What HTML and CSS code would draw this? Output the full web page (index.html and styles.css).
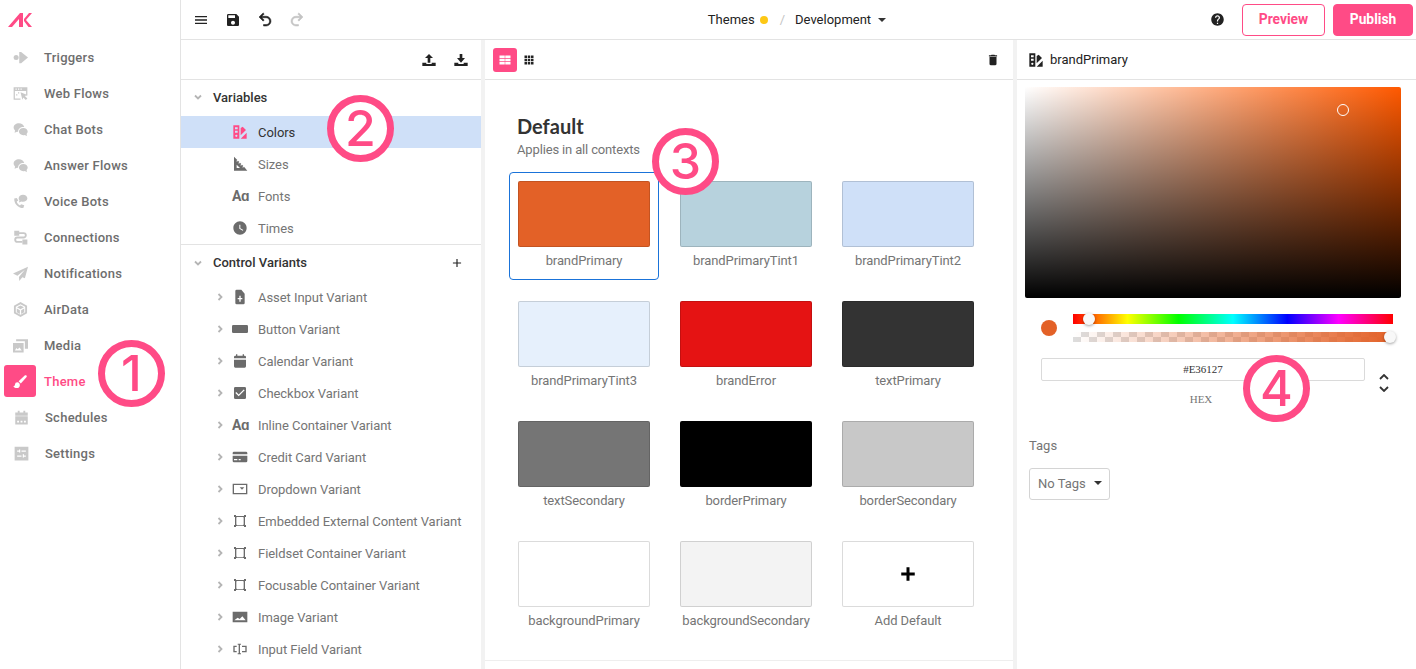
FILE: index.html
```html
<!DOCTYPE html>
<html lang="en">
<head>
  <meta charset="UTF-8" />
  <title>Theme</title>
  <link rel="stylesheet" href="styles.css">
</head>
<body>
  <svg class="sprite">
    <symbol id="i-trigger" viewBox="0 0 24 24"><circle cx="5" cy="12" r="4"/><path d="M10 3h3l11 9-11 9h-3z"/></symbol>
    <symbol id="i-web" viewBox="0 0 24 24"><path fill-rule="evenodd" d="M1 2h22v13h-2V8H3v12h9v2H1zM4 4v2h2V4zm4 0v2h2V4zm4 0v2h2V4z"/><path d="M12 10l11 4.500-4 1.500 4 4-2.500 2.500-4-4L15 22zM8 10h2v2H8zM5 13h2v2H5z"/></symbol>
    <symbol id="i-chat" viewBox="0 0 24 24"><path d="M9.500 2C4.800 2 1 5 1 8.800c0 1.800.9 3.400 2.300 4.600L2.500 17l4-1.500c.5.100 1 .2 1.600.3C8 11 12 7.500 18 8 17 4.500 13.500 2 9.500 2z"/><path d="M16.500 9.500c-4 0-7 2.600-7 5.800s3 5.800 7 5.800c.7 0 1.400-.1 2-.3l4 1.700-.8-3.500c1.200-1 1.800-2.300 1.800-3.700 0-3.200-3-5.800-7-5.800z"/></symbol>
    <symbol id="i-voice" viewBox="0 0 24 24"><path d="M6 6.500L2 7c-.6 8 5.500 15 14.500 15.500l1.500-4.500-5-1.500-1.800 1.800C8.500 17 6.500 14.500 6 12l2.500-1.500z"/><path d="M16 1c-3.800 0-7 2.500-7 5.700 0 1.300.5 2.400 1.300 3.300L9.500 13.500l3.900-1.500c.8.200 1.700.4 2.600.4 3.800 0 7-2.500 7-5.700S19.800 1 16 1z"/></symbol>
    <symbol id="i-conn" viewBox="0 0 24 24"><path d="M2 1h8v8H2zM15 15h8v8h-8z"/><path fill="none" stroke="currentColor" stroke-width="3" d="M9 5h8a3.500 3.500 0 0 1 0 7H7a3.500 3.500 0 0 0 0 7h8"/></symbol>
    <symbol id="i-plane" viewBox="0 0 24 24"><path d="M24 1L0 12l7 3.500L19 6l-9.500 11.500L10 24l5-6 4 1.500z"/></symbol>
    <symbol id="i-air" viewBox="0 0 24 24"><path fill-rule="evenodd" d="M12 0l10.500 6v12L12 24 1.500 18V6zM12 3.500L4.500 7.700v8.600l7.500 4.200 7.500-4.200V7.700z"/><path d="M12 5.500l5.500 3L12 11.500l-5.500-3zM6 10.500l5 2.800V19l-5-2.800zM18 10.500l-5 2.800V19l5-2.800z"/></symbol>
    <symbol id="i-media" viewBox="0 0 24 24"><path fill-rule="evenodd" d="M0 8h17v15H0zM3 20h11l-3.500-5-3 3-2-2z"/><path d="M5 2h19v15h-5V5H5z"/></symbol>
    <symbol id="i-brush" viewBox="0 0 24 24"><path d="M21.500 2.500c-.8-.8-2-.8-2.800 0L9 11.500l3.500 3.500 9-9.700c.8-.8.8-2 0-2.800zM7 13a3.800 3.800 0 0 0-3.800 3.800c0 1.500-1.300 2.700-2.700 2.700 1.200 1.900 3.300 3 5.500 3a5 5 0 0 0 5-5c0-2.500-1.700-4.500-4-4.500z"/></symbol>
    <symbol id="i-sched" viewBox="0 0 24 24"><path fill-rule="evenodd" d="M6 1h3v3h6V1h3v3h4v5H2V4h4zM2 10h20v13H2zm3 7v3h3v-3zm5.500 0v3h3v-3zm5.500 0v3h3v-3z"/></symbol>
    <symbol id="i-settings" viewBox="0 0 24 24"><path fill-rule="evenodd" d="M1 1h22v22H1zM5 7v2h3v1.500h2V5.500H8V7zM12 7v2h7V7zM5 15v2h7v-2zM14 13v5.500h2V17h3v-2h-3v-2z"/></symbol>
    <symbol id="i-menu" viewBox="0 0 24 24"><path d="M3 18h18v-2H3v2zm0-5h18v-2H3v2zm0-7v2h18V6H3z"/></symbol>
    <symbol id="i-save" viewBox="0 0 24 24"><path d="M17 3H5c-1.110 0-2 .9-2 2v14c0 1.100.89 2 2 2h14c1.100 0 2-.9 2-2V7l-4-4zm-5 16c-1.660 0-3-1.340-3-3s1.340-3 3-3 3 1.340 3 3-1.340 3-3 3zm3-10H5V5h10v4z"/></symbol>
    <symbol id="i-undo" viewBox="0 0 24 24"><path stroke="currentColor" stroke-width=".7" d="M13.500 7A6.500 6.500 0 0 1 20 13.500 6.500 6.500 0 0 1 13.500 20H10v-2h3.500c2.500 0 4.500-2 4.500-4.500S16 9 13.500 9H7.830l3.080 3.090L9.500 13.500 4 8l5.500-5.500 1.420 1.410L7.830 7h5.670z"/></symbol>
    <symbol id="i-redo" viewBox="0 0 24 24"><path stroke="currentColor" stroke-width=".7" d="M10.500 7A6.500 6.500 0 0 0 4 13.500 6.500 6.500 0 0 0 10.500 20H14v-2h-3.500C8 18 6 16 6 13.500S8 9 10.500 9h5.670l-3.080 3.090 1.410 1.410L20 8l-5.500-5.500-1.420 1.410L16.170 7H10.500z"/></symbol>
    <symbol id="i-help" viewBox="0 0 24 24"><path d="M12 2C6.480 2 2 6.480 2 12s4.480 10 10 10 10-4.480 10-10S17.520 2 12 2zm1 17h-2v-2h2v2zm2.070-7.750l-.9.920C13.450 12.900 13 13.500 13 15h-2v-.5c0-1.100.45-2.100 1.170-2.830l1.240-1.260c.37-.36.59-.86.59-1.410 0-1.100-.9-2-2-2s-2 .9-2 2H8c0-2.210 1.790-4 4-4s4 1.790 4 4c0 .88-.36 1.680-.93 2.250z"/></symbol>
    <symbol id="i-up" viewBox="0 0 24 24"><path d="M12 3l-6 6h4v7h4V9h4zM2 16h6v2h8v-2h6v5H2z"/></symbol>
    <symbol id="i-down" viewBox="0 0 24 24"><path d="M10 3h4v6h4l-6 7-6-7h4zM2 16h6v2h8v-2h6v5H2z"/></symbol>
    <symbol id="i-plus" viewBox="0 0 24 24"><path d="M10 3h4v7h7v4h-7v7h-4v-7H3v-4h7z"/></symbol>
    <symbol id="i-plus-thin" viewBox="0 0 24 24"><path d="M19 13h-6v6h-2v-6H5v-2h6V5h2v6h6v2z"/></symbol>
    <symbol id="i-swatch" viewBox="0 0 24 24"><path fill-rule="evenodd" d="M2 2h9v20H2zM4.500 5v3h4V5zm0 5v3h4v-3zm2 6a1.700 1.700 0 1 0 0 3.400 1.700 1.700 0 0 0 0-3.400z"/><path d="M13 6l3-2 5 5-8 8zM13 22l9-9v9z"/></symbol>
    <symbol id="i-ruler" viewBox="0 0 24 24"><path fill-rule="evenodd" d="M3 1l5 5-1.500 1.500 1 1L9 7l2 2-1.500 1.500 1 1L12 10l2 2-1.500 1.500 1 1L15 13l2 2-1.500 1.500 1 1L18 16l5 6H3zM7 13v5h5z"/></symbol>
    <symbol id="i-clock" viewBox="0 0 24 24"><path d="M12 2C6.500 2 2 6.500 2 12s4.500 10 10 10 10-4.500 10-10S17.500 2 12 2zm4.200 14.200L11 13V7h1.500v5.200l4.500 2.700-.8 1.300z"/></symbol>
    <symbol id="i-file" viewBox="0 0 24 24"><path d="M14 1H7a2 2 0 0 0-2 2v18a2 2 0 0 0 2 2h10a2 2 0 0 0 2-2V7l-5-6zm1.500 14.500H13V19h-2v-3.500H8.500v-2H11V10h2v3.500h2.500v2z"/></symbol>
    <symbol id="i-button" viewBox="0 0 24 24"><rect x="0" y="6" width="24" height="12" rx="2"/></symbol>
    <symbol id="i-cal" viewBox="0 0 24 24"><path d="M6 2h2v2h8V2h2v2h1a2 2 0 0 1 2 2v2H3V6a2 2 0 0 1 2-2h1zM3 10h18v10a2 2 0 0 1-2 2H5a2 2 0 0 1-2-2z"/></symbol>
    <symbol id="i-check" viewBox="0 0 24 24"><path d="M19 3H5a2 2 0 0 0-2 2v14a2 2 0 0 0 2 2h14a2 2 0 0 0 2-2V5a2 2 0 0 0-2-2zm-9 14l-5-5 1.410-1.410L10 14.170l7.590-7.590L19 8l-9 9z"/></symbol>
    <symbol id="i-card" viewBox="0 0 24 24"><path fill-rule="evenodd" d="M1 6a2 2 0 0 1 2-2h18a2 2 0 0 1 2 2v2H1zM1 10h22v8a2 2 0 0 1-2 2H3a2 2 0 0 1-2-2zm2 5v2h5v-2zm7 0v2h3v-2z"/></symbol>
    <symbol id="i-drop" viewBox="0 0 24 24"><path fill-rule="evenodd" d="M1 4h22v16H1zm2 2v12h18V6z"/><path d="M15 13l-3.500-3.500h7z"/></symbol>
    <symbol id="i-box" viewBox="0 0 24 24"><path d="M3 3h3v1.500h12V3h3v3h-1.500v12H21v3h-3v-1.500H6V21H3v-3h1.500V6H3zm4.500 3v.5H6.500v11h1v1h9v-1h1v-11h-1V6z"/></symbol>
    <symbol id="i-image" viewBox="0 0 24 24"><path fill-rule="evenodd" d="M1 4h22v16H1zM3.500 17h17l-5-6-4 4-3-2z"/></symbol>
    <symbol id="i-input" viewBox="0 0 24 24"><path d="M2 7h5v2H4v6h3v2H2zM15 7h7v10h-7v-2h5V9h-5zM8.500 4h5v1.500h-1.500v13h1.500V20h-5v-1.500H10v-13H8.500z"/></symbol>
    <symbol id="i-table" viewBox="0 0 24 24"><path d="M1 3h10.500v5.200H1zM12.500 3H23v5.200H12.500zM1 9.400h10.500v5.200H1zM12.500 9.400H23v5.200H12.500zM1 15.800h10.500V21H1zM12.500 15.800H23V21H12.500z"/></symbol>
    <symbol id="i-apps" viewBox="0 0 24 24"><path d="M3 3h5v5H3zM9.500 3h5v5h-5zM16 3h5v5h-5zM3 9.500h5v5H3zM9.500 9.500h5v5h-5zM16 9.500h5v5h-5zM3 16h5v5H3zM9.500 16h5v5h-5zM16 16h5v5h-5z"/></symbol>
    <symbol id="i-trash" viewBox="0 0 24 24"><path d="M6 19c0 1.100.9 2 2 2h8c1.100 0 2-.9 2-2V7H6v12zM19 4h-3.500l-1-1h-5l-1 1H5v2h14V4z"/></symbol>
    <symbol id="i-chev-d" viewBox="0 0 10 10"><path fill="none" stroke="currentColor" stroke-width="1.800" d="M2 3.500l3 3 3-3"/></symbol>
    <symbol id="i-chev-r" viewBox="0 0 10 10"><path fill="none" stroke="currentColor" stroke-width="1.800" d="M3.500 2l3 3-3 3"/></symbol>
  </svg>

  <div class="app">
    <nav class="sidebar">
      <div class="logo">
        <svg width="24" height="14" viewBox="0 0 24 14"><path d="M0 14L12 0h3v14h-4V6l-7 8zM16 6l5-6h3l-6 7 6 7h-3.500L16 8z"/></svg>
      </div>
      <a class="nav-item"><span class="nav-icon"><svg><use href="#i-trigger"/></svg></span>Triggers</a>
      <a class="nav-item"><span class="nav-icon"><svg><use href="#i-web"/></svg></span>Web Flows</a>
      <a class="nav-item"><span class="nav-icon"><svg><use href="#i-chat"/></svg></span>Chat Bots</a>
      <a class="nav-item"><span class="nav-icon"><svg><use href="#i-chat"/></svg></span>Answer Flows</a>
      <a class="nav-item"><span class="nav-icon"><svg><use href="#i-voice"/></svg></span>Voice Bots</a>
      <a class="nav-item"><span class="nav-icon"><svg><use href="#i-conn"/></svg></span>Connections</a>
      <a class="nav-item"><span class="nav-icon"><svg><use href="#i-plane"/></svg></span>Notifications</a>
      <a class="nav-item"><span class="nav-icon"><svg><use href="#i-air"/></svg></span>AirData</a>
      <a class="nav-item"><span class="nav-icon"><svg><use href="#i-media"/></svg></span>Media</a>
      <a class="nav-item active"><span class="nav-icon"><svg><use href="#i-brush"/></svg></span>Theme</a>
      <a class="nav-item nudge"><span class="nav-icon"><svg><use href="#i-sched"/></svg></span>Schedules</a>
      <a class="nav-item nudge"><span class="nav-icon"><svg><use href="#i-settings"/></svg></span>Settings</a>
    </nav>

    <div class="main">
      <header class="topbar">
        <div class="top-tools">
          <svg class="icon16"><use href="#i-menu"/></svg>
          <svg class="icon16"><use href="#i-save"/></svg>
          <svg class="icon16 big"><use href="#i-undo"/></svg>
          <svg class="icon16 big disabled"><use href="#i-redo"/></svg>
        </div>
        <div class="crumbs">
          <span>Themes</span>
          <span class="dot"></span>
          <span class="slash">/</span>
          <span>Development</span>
          <span class="caret"></span>
        </div>
        <div class="top-actions">
          <svg class="icon14 help"><use href="#i-help"/></svg>
          <button class="btn btn-outline">Preview</button>
          <button class="btn btn-solid">Publish</button>
        </div>
      </header>

      <div class="panels">
        <aside class="tree-panel">
          <div class="toolbar toolbar-end">
            <svg class="icon16"><use href="#i-up"/></svg>
            <svg class="icon16"><use href="#i-down"/></svg>
          </div>
          <div class="tree-head head-top"><svg class="chev"><use href="#i-chev-d"/></svg>Variables</div>
          <div class="tree-leaf selected"><svg class="tree-icon"><use href="#i-swatch"/></svg>Colors</div>
          <div class="tree-leaf"><svg class="tree-icon"><use href="#i-ruler"/></svg>Sizes</div>
          <div class="tree-leaf"><span class="tree-icon aa">Aɑ</span>Fonts</div>
          <div class="tree-leaf"><svg class="tree-icon"><use href="#i-clock"/></svg>Times</div>
          <div class="tree-head with-line"><svg class="chev"><use href="#i-chev-d"/></svg>Control Variants<svg class="add"><use href="#i-plus-thin"/></svg></div>
          <div class="tree-item first"><svg class="chev"><use href="#i-chev-r"/></svg><svg class="tree-icon"><use href="#i-file"/></svg>Asset Input Variant</div>
          <div class="tree-item"><svg class="chev"><use href="#i-chev-r"/></svg><svg class="tree-icon"><use href="#i-button"/></svg>Button Variant</div>
          <div class="tree-item"><svg class="chev"><use href="#i-chev-r"/></svg><svg class="tree-icon"><use href="#i-cal"/></svg>Calendar Variant</div>
          <div class="tree-item"><svg class="chev"><use href="#i-chev-r"/></svg><svg class="tree-icon"><use href="#i-check"/></svg>Checkbox Variant</div>
          <div class="tree-item"><svg class="chev"><use href="#i-chev-r"/></svg><span class="tree-icon aa">Aɑ</span>Inline Container Variant</div>
          <div class="tree-item"><svg class="chev"><use href="#i-chev-r"/></svg><svg class="tree-icon"><use href="#i-card"/></svg>Credit Card Variant</div>
          <div class="tree-item"><svg class="chev"><use href="#i-chev-r"/></svg><svg class="tree-icon"><use href="#i-drop"/></svg>Dropdown Variant</div>
          <div class="tree-item"><svg class="chev"><use href="#i-chev-r"/></svg><svg class="tree-icon"><use href="#i-box"/></svg>Embedded External Content Variant</div>
          <div class="tree-item"><svg class="chev"><use href="#i-chev-r"/></svg><svg class="tree-icon"><use href="#i-box"/></svg>Fieldset Container Variant</div>
          <div class="tree-item"><svg class="chev"><use href="#i-chev-r"/></svg><svg class="tree-icon"><use href="#i-box"/></svg>Focusable Container Variant</div>
          <div class="tree-item"><svg class="chev"><use href="#i-chev-r"/></svg><svg class="tree-icon"><use href="#i-image"/></svg>Image Variant</div>
          <div class="tree-item"><svg class="chev"><use href="#i-chev-r"/></svg><svg class="tree-icon"><use href="#i-input"/></svg>Input Field Variant</div>
        </aside>

        <section class="center-panel">
          <div class="toolbar">
            <span class="view-btn on"><svg class="icon12"><use href="#i-table"/></svg></span>
            <span class="view-btn"><svg class="icon12"><use href="#i-apps"/></svg></span>
            <svg class="icon14 trash"><use href="#i-trash"/></svg>
          </div>
          <div class="group">
            <h2>Default</h2>
            <p>Applies in all contexts</p>
            <div class="swatches">
              <div class="card picked"><div class="swatch c-brand"></div><span>brandPrimary</span></div>
              <div class="card"><div class="swatch c-tint1"></div><span>brandPrimaryTint1</span></div>
              <div class="card"><div class="swatch c-tint2"></div><span>brandPrimaryTint2</span></div>
              <div class="card"><div class="swatch c-tint3"></div><span>brandPrimaryTint3</span></div>
              <div class="card"><div class="swatch c-error"></div><span>brandError</span></div>
              <div class="card"><div class="swatch c-text"></div><span>textPrimary</span></div>
              <div class="card"><div class="swatch c-text2"></div><span>textSecondary</span></div>
              <div class="card"><div class="swatch c-border"></div><span>borderPrimary</span></div>
              <div class="card"><div class="swatch c-border2"></div><span>borderSecondary</span></div>
              <div class="card"><div class="swatch c-bg"></div><span>backgroundPrimary</span></div>
              <div class="card"><div class="swatch c-bg2"></div><span>backgroundSecondary</span></div>
              <div class="card"><div class="swatch c-bg add-swatch"><svg><use href="#i-plus"/></svg></div><span>Add Default</span></div>
            </div>
          </div>
        </section>

        <aside class="editor">
          <div class="toolbar editor-head">
            <svg class="icon16"><use href="#i-swatch"/></svg>
            <span>brandPrimary</span>
          </div>
          <div class="picker"><span class="picker-handle"></span></div>
          <div class="sliders-row">
            <span class="current"></span>
            <div class="sliders">
              <div class="slider hue"><span class="thumb thumb-hue"></span></div>
              <div class="slider alpha"><span class="thumb thumb-alpha"></span></div>
            </div>
          </div>
          <div class="hex-row">
            <div class="hex-field">
              <div class="hex-input">#E36127</div>
              <div class="hex-label">HEX</div>
            </div>
            <div class="hex-toggle">
              <svg viewBox="0 0 10 6"><path d="M1 5l4-4 4 4"/></svg>
              <svg viewBox="0 0 10 6"><path d="M1 1l4 4 4-4"/></svg>
            </div>
          </div>
          <div class="tags-label">Tags</div>
          <div class="tags-select">No Tags<span class="caret"></span></div>
        </aside>
      </div>
    </div>
  </div>

  <!-- numbered callouts lie over the page -->
  <div class="callout c1">1</div>
  <div class="callout c2">2</div>
  <div class="callout c3">3</div>
  <div class="callout c4">4</div>
</body>
</html>
```

FILE: styles.css
```css
* {
  box-sizing: border-box;
}

html,
body {
  margin: 0;
  height: 669px;
  overflow: hidden;
  background: #fff;
  font-family: Roboto, "Liberation Sans", sans-serif;
  font-size: 13px;
  color: #333;
}

.sprite {
  display: none;
}

svg {
  fill: currentColor;
  display: block;
  flex: none;
}

.icon12 { width: 12px; height: 12px; }
.icon14 { width: 14px; height: 14px; }
.icon16 { width: 16px; height: 16px; }

.app {
  display: flex;
  height: 669px;
}

/* left nav */
.sidebar {
  width: 181px;
  flex: none;
  border-right: 1px solid #e3e3e3;
}

.logo {
  height: 39px;
  padding: 13px 0 0 8px;
  color: #ff4b86;
}

.nav-item {
  display: flex;
  align-items: center;
  height: 36px;
  padding-left: 4px;
  font-weight: 500;
  letter-spacing: 0.25px;
  color: #6e6e6e;
}

.nav-item.nudge {
  padding-left: 5px;
}

.nav-icon {
  width: 32px;
  height: 32px;
  margin-right: 8px;
  border-radius: 3px;
  display: flex;
  align-items: center;
  justify-content: center;
  color: #c9c9c9;
}

.nav-icon svg {
  width: 15px;
  height: 15px;
}

.nav-item.active {
  color: #ff4b86;
}

.nav-item.active .nav-icon {
  background: #ff4b86;
  color: #fff;
}

/* top bar */
.main {
  flex: 1;
  min-width: 0;
  display: flex;
  flex-direction: column;
}

.topbar {
  height: 40px;
  flex: none;
  display: grid;
  grid-template-columns: 1fr auto 1fr;
  align-items: center;
  border-bottom: 1px solid #e3e3e3;
  color: #222;
}

.top-tools {
  display: flex;
  align-items: center;
  gap: 16px;
  padding-left: 12px;
}

.big {
  width: 18px;
  height: 18px;
  margin: 0 -1px;
}

.disabled {
  color: #c4c4c4;
}

.crumbs {
  display: flex;
  align-items: center;
  padding-right: 3px;
}

.dot {
  width: 8px;
  height: 8px;
  margin-left: 5px;
  border-radius: 50%;
  background: #fdc816;
}

.slash {
  margin: 0 10px 0 12px;
  color: #c4c4c4;
}

.caret {
  width: 0;
  height: 0;
  margin-left: 7px;
  border: 4px solid transparent;
  border-top: 4px solid #333;
  border-bottom: 0;
}

.top-actions {
  display: flex;
  align-items: center;
  justify-content: flex-end;
  gap: 8px;
  padding-right: 3px;
}

.help {
  width: 15px;
  height: 15px;
  margin-right: 9px;
}

.btn {
  height: 32px;
  border-radius: 4px;
  font: 700 13.8px Roboto, sans-serif;
  padding: 0 0 2px;
}

.btn-outline {
  width: 83px;
  background: #fff;
  border: 1px solid #ff4b86;
  color: #ff4b86;
}

.btn-solid {
  width: 80px;
  background: #ff4b86;
  border: 1px solid #ff4b86;
  color: #fff;
}

/* panels */
.panels {
  flex: 1;
  min-height: 0;
  display: flex;
  gap: 4px;
  background: #f2f2f2;
}

.tree-panel,
.center-panel,
.editor {
  background: #fff;
  overflow: hidden;
}

.tree-panel { width: 300px; flex: none; }
.center-panel { width: 528px; flex: none; }
.editor { flex: 1; min-width: 0; }

.toolbar {
  height: 40px;
  display: flex;
  align-items: center;
  border-bottom: 1px solid #e3e3e3;
  color: #222;
}

.toolbar-end {
  justify-content: flex-end;
  gap: 16px;
  padding-right: 12px;
}

/* tree */
.tree-head {
  display: flex;
  align-items: center;
  height: 36px;
  padding-left: 12px;
  font-weight: 500;
  color: #333;
}

.head-top {
  padding-bottom: 2px;
}

.with-line {
  border-top: 1px solid #e3e3e3;
}

.chev {
  width: 10px;
  height: 10px;
  color: #b5b5b5;
}

.tree-head .chev {
  margin-right: 10px;
}

.add {
  width: 14px;
  height: 14px;
  margin-left: auto;
  margin-right: 17px;
  color: #222;
}

.tree-leaf,
.tree-item {
  display: flex;
  align-items: center;
  height: 32px;
  letter-spacing: -0.05px;
  color: #757575;
}

.tree-leaf {
  padding-left: 51px;
}

.tree-item {
  padding-left: 34px;
}

.tree-item.first {
  margin-top: 1px;
}

.tree-item .chev {
  margin-right: 7px;
}

.tree-icon {
  width: 16px;
  height: 16px;
  margin-right: 10px;
  flex: none;
  color: #6b6b6b;
}

.aa {
  font-weight: 700;
  font-size: 14px;
  line-height: 16px;
  letter-spacing: -0.3px;
  white-space: nowrap;
}

.tree-leaf.selected {
  background: #cfe0f8;
  color: #333;
}

.selected .tree-icon {
  color: #ff4b86;
}

/* center */
.view-btn {
  width: 24px;
  height: 24px;
  border-radius: 3px;
  display: flex;
  align-items: center;
  justify-content: center;
}

.view-btn.on {
  margin-left: 8px;
  background: #ff4b86;
  color: #fff;
}

.trash {
  margin-left: auto;
  margin-right: 13px;
}

.group {
  padding: 34px 0 20px 24px;
  border-bottom: 1px solid #eee;
}

.group h2 {
  margin: 0 0 0 8px;
  font: 700 20px/24px Lato, sans-serif;
  color: #333;
}

.group p {
  margin: 3px 0 13px 8px;
  line-height: 18px;
  letter-spacing: -0.15px;
  color: #757575;
}

.swatches {
  display: grid;
  grid-template-columns: repeat(3, 150px);
  grid-auto-rows: 108px;
  gap: 12px;
}

.card {
  padding: 8px;
  border: 1px solid transparent;
  border-radius: 4px;
  text-align: center;
  color: #757575;
}

.card span {
  display: block;
  margin-top: 3px;
  line-height: 22px;
  letter-spacing: -0.1px;
  white-space: nowrap;
}

.card.picked {
  border-color: #1a73d9;
}

.swatch {
  height: 66px;
  border: 1px solid rgba(0, 0, 0, 0.14);
  border-radius: 2px;
}

.c-brand { background: #e36127; }
.c-tint1 { background: #b7d2dd; }
.c-tint2 { background: #cfe0f8; }
.c-tint3 { background: #e6f0fc; }
.c-error { background: #e51313; }
.c-text { background: #333; }
.c-text2 { background: #757575; }
.c-border { background: #000; }
.c-border2 { background: #c8c8c8; }
.c-bg { background: #fff; }
.c-bg2 { background: #f3f3f3; }

.add-swatch {
  display: flex;
  align-items: center;
  justify-content: center;
  color: #000;
}

.add-swatch svg {
  width: 18px;
  height: 18px;
}

/* editor */
.editor-head {
  gap: 6px;
  padding-left: 11px;
}

.picker {
  position: relative;
  width: 376px;
  height: 211px;
  margin: 7px 0 0 8px;
  border-radius: 2px;
  background:
    linear-gradient(to top, #000, transparent),
    linear-gradient(to right, #fff, transparent),
    #ff5900;
}

.picker-handle {
  position: absolute;
  left: 312px;
  top: 17px;
  width: 12px;
  height: 12px;
  border: 1px solid #fff;
  border-radius: 50%;
}

.sliders-row {
  display: flex;
  align-items: center;
  gap: 16px;
  margin: 16px 0 0 24px;
}

.current {
  width: 16px;
  height: 16px;
  border-radius: 50%;
  background: #e36127;
}

.sliders {
  display: flex;
  flex-direction: column;
  gap: 8px;
  width: 320px;
}

.slider {
  position: relative;
  height: 10px;
}

.hue {
  background: linear-gradient(to right, #f00, #ff0 17%, #0f0 33%, #0ff 50%, #00f 67%, #f0f 83%, #f00);
}

.alpha {
  background:
    linear-gradient(to right, transparent, #e36127),
    repeating-conic-gradient(#ddd 0 25%, #fff 0 50%) 0 0 / 16px 10px;
}

.thumb {
  position: absolute;
  top: -1px;
  width: 12px;
  height: 12px;
  border-radius: 50%;
  background: #f8f8f8;
  box-shadow: 0 1px 3px rgba(0, 0, 0, 0.37);
}

.thumb-hue { left: 10px; }
.thumb-alpha { left: 311px; }

.hex-row {
  display: flex;
  margin: 16px 0 0 24px;
}

.hex-field {
  width: 324px;
}

.hex-input {
  height: 23px;
  border: 1px solid #dadada;
  border-radius: 2px;
  font: 11px/21px "Liberation Serif", serif;
  text-align: center;
  color: #333;
}

.hex-label {
  margin-top: 11px;
  padding-right: 4px;
  font: 11px/14px "Liberation Serif", serif;
  text-align: center;
  color: #757575;
}

.hex-toggle {
  width: 10px;
  margin: 16px 0 0 14px;
}

.hex-toggle svg {
  width: 10px;
  height: 6px;
  margin-bottom: 6px;
  fill: none;
  stroke: #333;
  stroke-width: 1.8;
}

.tags-label {
  margin: 32px 0 0 12px;
  line-height: 16px;
  color: #757575;
}

.tags-select {
  display: flex;
  align-items: center;
  width: 81px;
  height: 32px;
  margin: 14px 0 0 12px;
  padding: 0 0 2px 8px;
  border: 1px solid #d4d4d4;
  border-radius: 3px;
  color: #757575;
}

.tags-select .caret {
  margin-left: 8px;
}

/* callouts */
.callout {
  position: absolute;
  width: 67px;
  height: 67px;
  border: 7px solid #ff4b86;
  border-radius: 50%;
  background: #fff;
  color: #ff4b86;
  font: 500 50px/52px Inter, sans-serif;
  text-align: center;
}

.c1 { left: 98px; top: 340px; background: transparent; }
.c2 { left: 327px; top: 95px; }
.c3 { left: 652px; top: 128px; }
.c4 { left: 1243px; top: 355px; }
```
